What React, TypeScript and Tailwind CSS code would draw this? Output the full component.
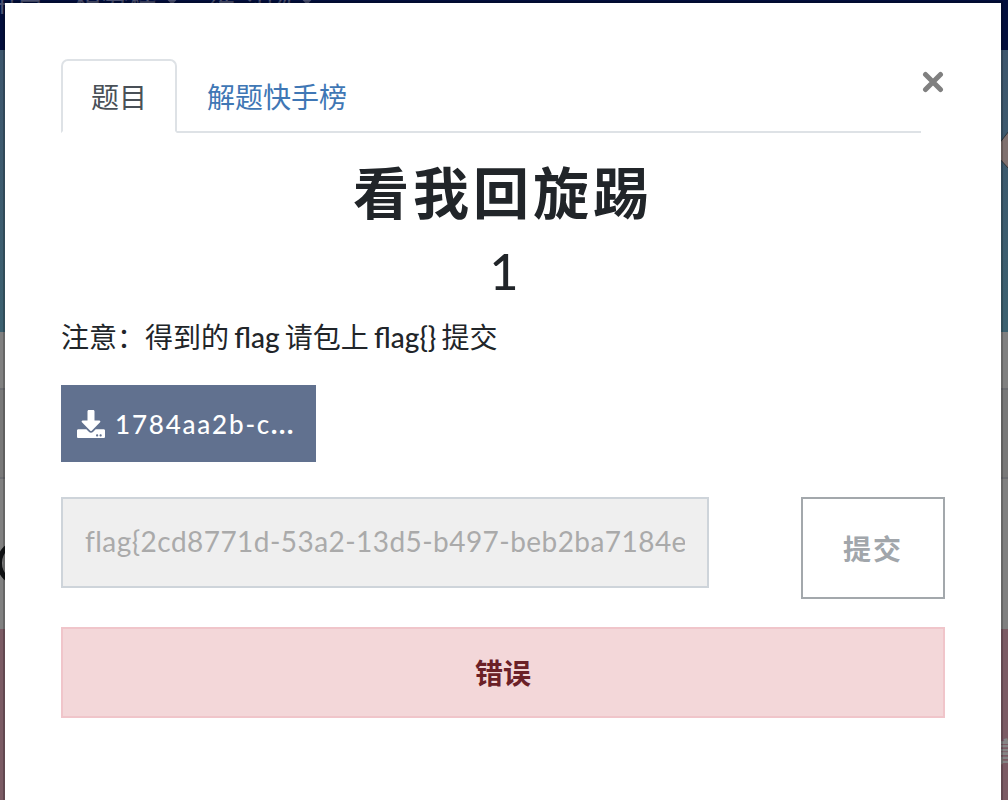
import clsx from "clsx";
import React, { useState } from "react";
import { FaDownload } from "react-icons/fa";

const tabs = [
  { id: "challenge", title: "题目" },
  { id: "solves", title: "解题快手榜" },
];

const menu = [
  { title: "用户", dropdown: false },
  { title: "积分榜", dropdown: true },
  { title: "练习场", dropdown: true },
];

const Backdrop: React.FC = () => (
  <div className="absolute inset-0 flex flex-col overflow-hidden">
    <nav className="h-[50px] shrink-0 bg-[#020e3c] overflow-hidden">
      <div className="flex gap-[29px] -mt-[19px] -ml-[12px] text-[28px] leading-[40px] text-[#4a5070]">
        {menu.map((item) => (
          <span key={item.title} className="flex items-center gap-2 whitespace-nowrap">
            {item.title}
            {item.dropdown && (
              <span className="w-0 h-0 border-x-[7px] border-x-transparent border-t-[8px] border-t-[#4a5070]" />
            )}
          </span>
        ))}
      </div>
    </nav>
    <div className="h-[282px] shrink-0 bg-linear-to-b from-[#3d566d] to-[#3c6170]" />
    <div className="h-[56px] shrink-0 bg-[#808080]" />
    <div className="h-[91px] shrink-0 bg-[#797979] border-y-2 border-[#6d6e72]" />
    <div className="h-[150px] shrink-0 bg-[#808080]" />
    <div className="flex-1 bg-[#7b5b64]" />
    <div className="absolute -left-[3px] top-[540px] w-[46px] h-[46px] rounded-full border-[5px] border-[#101214]" />
    <svg className="absolute left-[998px] top-[130px]" width="10" height="42">
      <path d="M11 1 L0 15 V27 L11 39 Z" fill="#80716f" stroke="#2c3439" strokeWidth="1" />
    </svg>
    <span className="absolute left-[992px] top-[732px] text-[28px] leading-[40px] font-bold text-[#858585]">
      高
    </span>
  </div>
);

const App: React.FC = () => {
  const [activeTab, setActiveTab] = useState("challenge");

  return (
    <div className="relative w-full h-screen overflow-hidden text-[#212529] font-['Lato','Noto_Sans_CJK_SC',sans-serif]">
      <Backdrop />
      <div
        role="dialog"
        className="relative mt-[1px] ml-[3px] w-[1000px] h-[820px] border-2 border-black/20 bg-white bg-clip-padding px-[56px] pt-[56px]"
      >
        <div className="flex justify-between">
          <ul className="flex w-[860px] h-[74px] border-b-2 border-[#dee2e6]">
            {tabs.map((tab) => (
              <li key={tab.id}>
                <button
                  onClick={() => setActiveTab(tab.id)}
                  className={clsx(
                    "h-[74px] px-[28px] pt-[2px] border-2 rounded-t-[7px] text-[28px] leading-[42px]",
                    activeTab === tab.id
                      ? "bg-white border-[#dee2e6] border-b-white text-[#495057]"
                      : "border-transparent text-[#3f77b5]"
                  )}
                >
                  {tab.title}
                </button>
              </li>
            ))}
          </ul>
          <button aria-label="Close" className="w-[24px] h-[46px] flex items-center justify-center">
            <svg width="22" height="22" viewBox="0 0 22 22">
              <path d="M3.5 3.5 L18.5 18.5 M18.5 3.5 L3.5 18.5" stroke="#808080" strokeWidth="5" strokeLinecap="round" />
            </svg>
          </button>
        </div>

        <h2 className="mt-[26px] text-center text-[56px] leading-[68px] font-bold tracking-[4px]">
          看我回旋踢
        </h2>
        <h3 className="mt-[14px] pl-[2px] text-center text-[50px] leading-[60px] font-medium">1</h3>
        <p className="mt-[15px] text-[28px] leading-[42px] [word-spacing:-1.9px]">
          注意：得到的 <span className="font-medium">flag</span> 请包上{" "}
          <span className="font-medium">flag{"{}"}</span> 提交
        </p>

        <a className="mt-[27px] w-[255px] h-[77px] px-[16px] flex items-center gap-[10px] bg-[#61718f] text-white text-[26px] font-medium tracking-[1.8px]">
          <FaDownload size={28} className="shrink-0" />
          <span className="pt-[2px] whitespace-nowrap">
            1784aa2b-c<span className="font-black">...</span>
          </span>
        </a>

        <div className="mt-[35px] flex justify-between items-start">
          <input
            disabled
            value="flag{2cd8771d-53a2-13d5-b497-beb2ba7184e"
            className="w-[648px] h-[91px] px-[22px] pb-[4px] border-2 border-[#ced4da] bg-[#efefef] text-[28px] tracking-[0.45px] text-[#aaaaaa]"
          />
          <button
            disabled
            className="w-[144px] h-[102px] pt-[2px] border-2 border-[#a3a8ac] text-[28px] font-bold tracking-[2px] text-[#a1a6ab]"
          >
            提交
          </button>
        </div>

        <div className="mt-[28px] h-[91px] flex items-center justify-center border-2 border-[#f0c5ca] bg-[#f3d7d9] text-[28px] font-bold text-[#6b2027]">
          错误
        </div>
      </div>
    </div>
  );
};

export default App;
